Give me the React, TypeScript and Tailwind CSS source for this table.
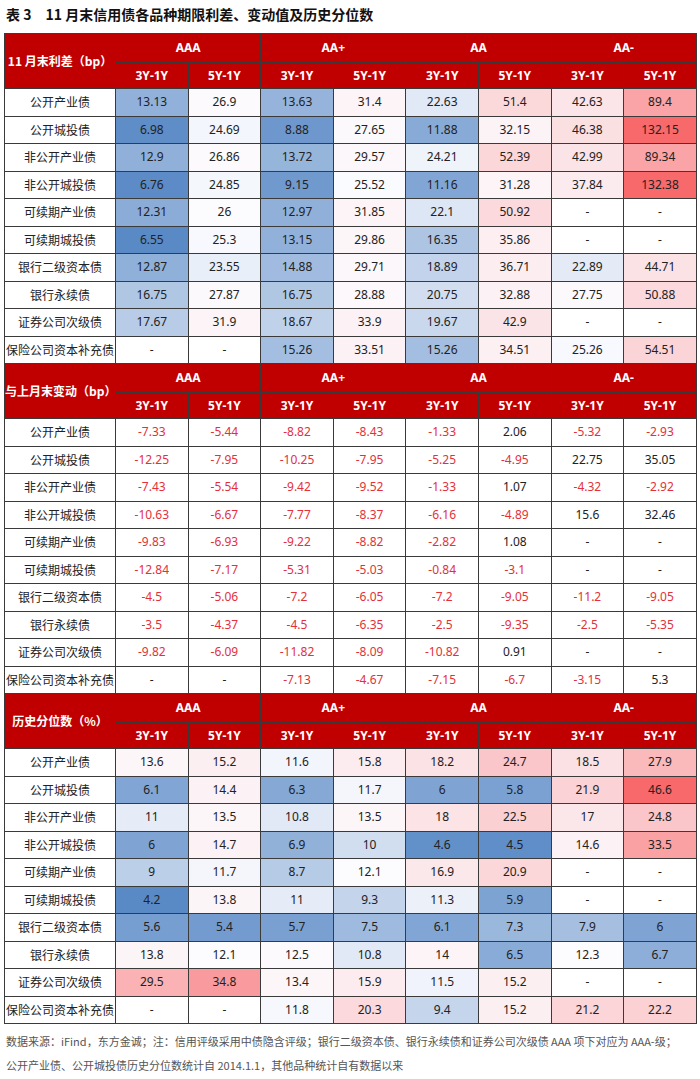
const rowLabels = [
  "公开产业债",
  "公开城投债",
  "非公开产业债",
  "非公开城投债",
  "可续期产业债",
  "可续期城投债",
  "银行二级资本债",
  "银行永续债",
  "证券公司次级债",
  "保险公司资本补充债",
];

type Cell = number | null;

const sections: { label: string; kind: "heat" | "sign"; rows: Cell[][] }[] = [
  {
    label: "11 月末利差（bp）",
    kind: "heat",
    rows: [
      [13.13, 26.9, 13.63, 31.4, 22.63, 51.4, 42.63, 89.4],
      [6.98, 24.69, 8.88, 27.65, 11.88, 32.15, 46.38, 132.15],
      [12.9, 26.86, 13.72, 29.57, 24.21, 52.39, 42.99, 89.34],
      [6.76, 24.85, 9.15, 25.52, 11.16, 31.28, 37.84, 132.38],
      [12.31, 26, 12.97, 31.85, 22.1, 50.92, null, null],
      [6.55, 25.3, 13.15, 29.86, 16.35, 35.86, null, null],
      [12.87, 23.55, 14.88, 29.71, 18.89, 36.71, 22.89, 44.71],
      [16.75, 27.87, 16.75, 28.88, 20.75, 32.88, 27.75, 50.88],
      [17.67, 31.9, 18.67, 33.9, 19.67, 42.9, null, null],
      [null, null, 15.26, 33.51, 15.26, 34.51, 25.26, 54.51],
    ],
  },
  {
    label: "与上月末变动（bp）",
    kind: "sign",
    rows: [
      [-7.33, -5.44, -8.82, -8.43, -1.33, 2.06, -5.32, -2.93],
      [-12.25, -7.95, -10.25, -7.95, -5.25, -4.95, 22.75, 35.05],
      [-7.43, -5.54, -9.42, -9.52, -1.33, 1.07, -4.32, -2.92],
      [-10.63, -6.67, -7.77, -8.37, -6.16, -4.89, 15.6, 32.46],
      [-9.83, -6.93, -9.22, -8.82, -2.82, 1.08, null, null],
      [-12.84, -7.17, -5.31, -5.03, -0.84, -3.1, null, null],
      [-4.5, -5.06, -7.2, -6.05, -7.2, -9.05, -11.2, -9.05],
      [-3.5, -4.37, -4.5, -6.35, -2.5, -9.35, -2.5, -5.35],
      [-9.82, -6.09, -11.82, -8.09, -10.82, 0.91, null, null],
      [null, null, -7.13, -4.67, -7.15, -6.7, -3.15, 5.3],
    ],
  },
  {
    label: "历史分位数（%）",
    kind: "heat",
    rows: [
      [13.6, 15.2, 11.6, 15.8, 18.2, 24.7, 18.5, 27.9],
      [6.1, 14.4, 6.3, 11.7, 6, 5.8, 21.9, 46.6],
      [11, 13.5, 10.8, 13.5, 18, 22.5, 17, 24.8],
      [6, 14.7, 6.9, 10, 4.6, 4.5, 14.6, 33.5],
      [9, 11.7, 8.7, 12.1, 16.9, 20.9, null, null],
      [4.2, 13.8, 11, 9.3, 11.3, 5.9, null, null],
      [5.6, 5.4, 5.7, 7.5, 6.1, 7.3, 7.9, 6],
      [13.8, 12.1, 12.5, 10.8, 14, 6.5, 12.3, 6.7],
      [29.5, 34.8, 13.4, 15.9, 11.5, 15.2, null, null],
      [null, null, 11.8, 20.3, 9.4, 15.2, 21.2, 22.2],
    ],
  },
];

const BLUE = [90, 138, 198];
const WHITE = [252, 252, 255];
const RED = [248, 105, 107];

function mix(a: number[], b: number[], t: number) {
  const c = a.map((x, i) => Math.round(x + (b[i] - x) * t));
  return `rgb(${c[0]}, ${c[1]}, ${c[2]})`;
}

// excel style 3 colour scale, midpoint = 50th percentile
function makeScale(rows: Cell[][]) {
  const vals = rows.flat().filter((v): v is number => v !== null).sort((a, b) => a - b);
  const min = vals[0];
  const max = vals[vals.length - 1];
  const r = 0.5 * (vals.length - 1);
  const lo = Math.floor(r);
  const mid = vals[lo] + (vals[Math.ceil(r)] - vals[lo]) * (r - lo);
  return (v: number) =>
    v <= mid ? mix(BLUE, WHITE, (v - min) / (mid - min)) : mix(WHITE, RED, (v - mid) / (max - mid));
}

const grades = ["AAA", "AA+", "AA", "AA-"];

export default function App() {
  return (
    <div className="w-[700px] bg-white font-['Noto_Sans','Noto_Sans_CJK_SC',sans-serif] text-[#222]">
      <div className="pl-[6px] pt-[6px] text-[14px] font-bold leading-[16px] text-[#111] font-['Noto_Sans_CJK_SC',sans-serif]">
        表 3　11 月末信用债各品种期限利差、变动值及历史分位数
      </div>

      <table className="ml-[4px] mt-[11px] w-[692px] table-fixed border-collapse text-[12px]">
        <colgroup>
          <col className="w-[111px]" />
          {Array.from({ length: 8 }).map((_, i) => (
            <col key={i} className="w-[72.6px]" />
          ))}
        </colgroup>
        {sections.map((sec) => {
          const scale = sec.kind === "heat" ? makeScale(sec.rows) : null;
          return (
            <tbody key={sec.label}>
              <tr className="h-[29px] bg-[#c00000] text-white">
                <th
                  rowSpan={2}
                  className="border border-[#3a3a3a] px-0 text-center font-bold font-['Noto_Sans_CJK_SC',sans-serif] text-[12px]"
                >
                  {sec.label}
                </th>
                {grades.map((g) => (
                  <th key={g} colSpan={2} className="border border-[#3a3a3a] text-center font-bold">
                    {g}
                  </th>
                ))}
              </tr>
              <tr className="h-[26px] bg-[#c00000] text-white">
                {grades.flatMap((g) => [
                  <th key={g + "3"} className="border border-[#3a3a3a] text-center font-bold">
                    3Y-1Y
                  </th>,
                  <th key={g + "5"} className="border border-[#3a3a3a] text-center font-bold">
                    5Y-1Y
                  </th>,
                ])}
              </tr>
              {sec.rows.map((row, ri) => (
                <tr key={ri} className="h-[27.5px]">
                  <td className="whitespace-nowrap border border-[#3a3a3a] px-0 text-center font-['Noto_Sans_CJK_SC',sans-serif] text-[12px] text-[#222]">
                    {rowLabels[ri]}
                  </td>
                  {row.map((v, ci) => {
                    const neg = sec.kind === "sign" && v !== null && v < 0;
                    return (
                      <td
                        key={ci}
                        className={`border border-[#3a3a3a] text-center ${neg ? "text-[#e3303a]" : "text-[#222]"}`}
                        style={scale && v !== null ? { backgroundColor: scale(v) } : undefined}
                      >
                        {v === null ? "-" : String(v)}
                      </td>
                    );
                  })}
                </tr>
              ))}
            </tbody>
          );
        })}
      </table>

      <div className="mt-[5px] pl-[6px] text-[11px] leading-[24px] text-[#555] font-['Noto_Sans_CJK_SC',sans-serif]">
        <div className="whitespace-nowrap">
          数据来源：iFind，东方金诚；注：信用评级采用中债隐含评级；银行二级资本债、银行永续债和证券公司次级债 AAA 项下对应为 AAA-级；
        </div>
        <div className="whitespace-nowrap">公开产业债、公开城投债历史分位数统计自 2014.1.1，其他品种统计自有数据以来</div>
      </div>
    </div>
  );
}
